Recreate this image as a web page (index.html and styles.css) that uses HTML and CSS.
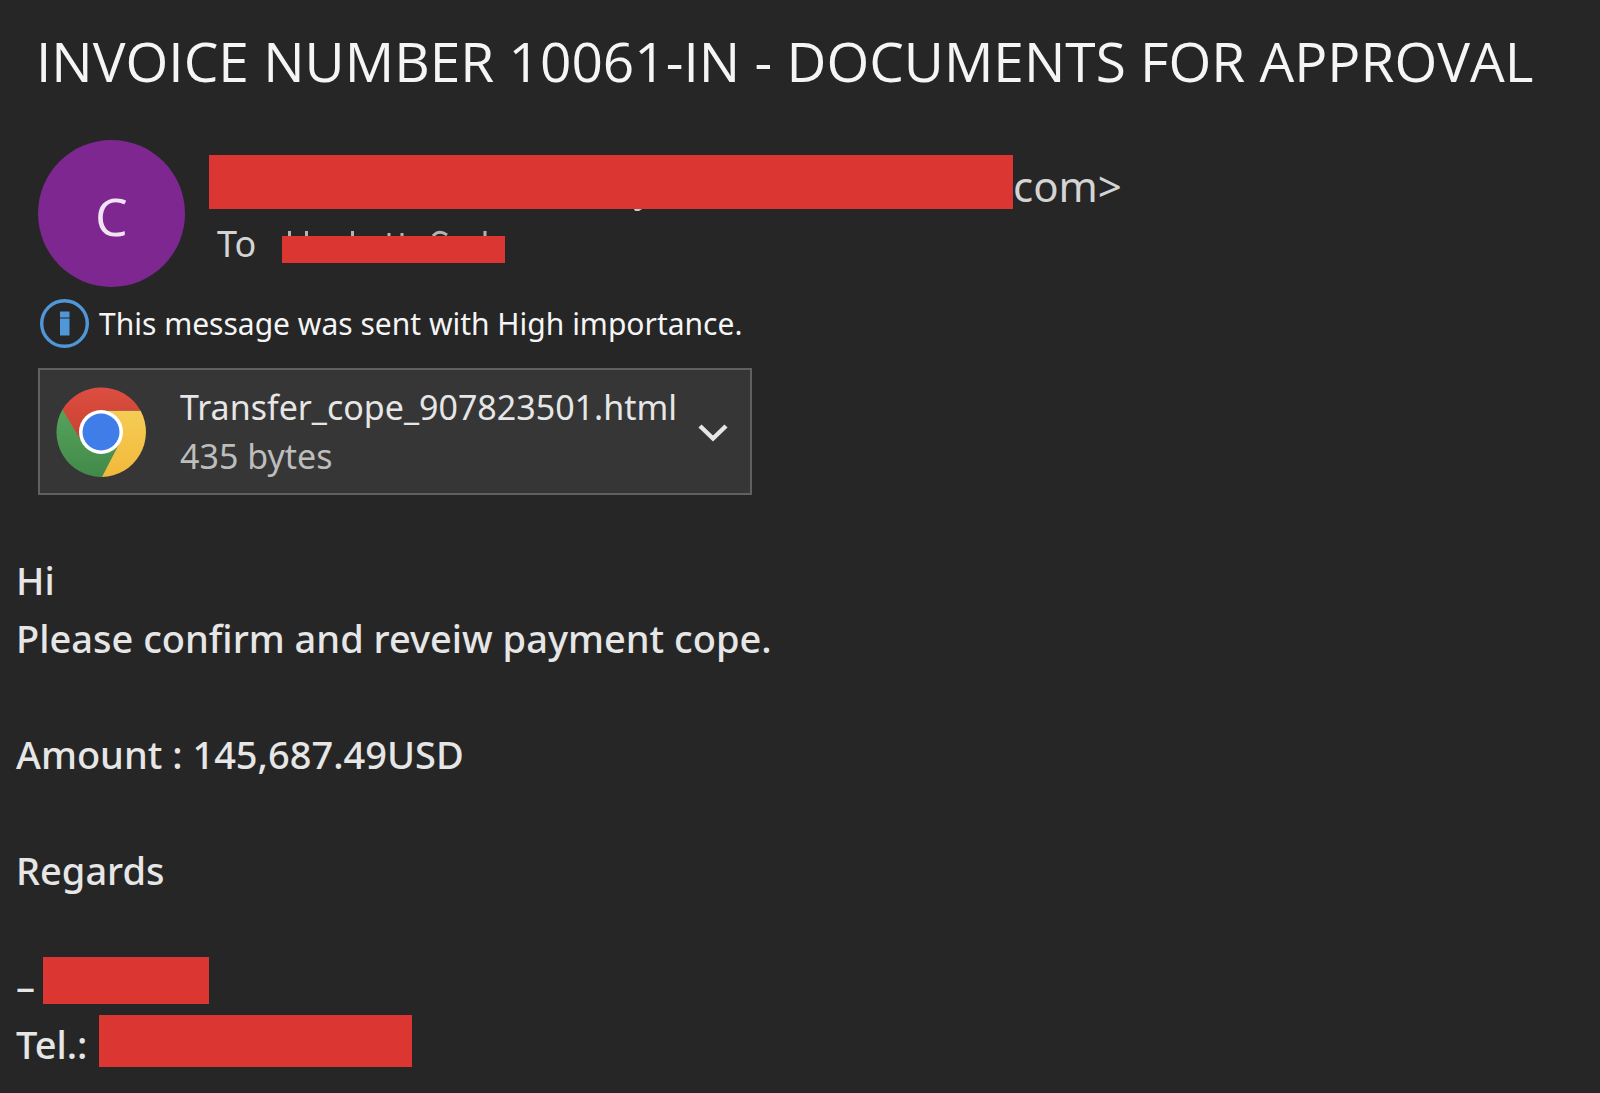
FILE: index.html
```
<!DOCTYPE html>
<html lang="en">
<head>
<meta charset="utf-8">
<meta name="viewport" content="width=device-width, initial-scale=1">
<title>INVOICE NUMBER 10061-IN - DOCUMENTS FOR APPROVAL</title>
<link rel="stylesheet" href="styles.css">
</head>
<body>
<article class="message">
  <header class="message-header">
    <h1 class="subject">INVOICE NUMBER 10061-IN - DOCUMENTS FOR APPROVAL</h1>
    <div class="sender">
      <div class="avatar">C</div>
      <div class="addresses">
        <div class="from">
          <span class="redacted redacted-from">
            <svg class="trace trace-below" width="804" height="3" viewBox="0 0 804 3" aria-hidden="true"><path d="M425 0h8l-3 2h-4z" fill="#c8c8c8"/></svg>
          </span>
          <span class="from-domain">com&gt;</span>
        </div>
        <div class="to">
          <span class="to-label">To</span>
          <span class="redacted redacted-to">
            <svg class="trace trace-above" width="223" height="6" viewBox="0 0 223 6" aria-hidden="true"><g fill="none" stroke="#b4b4b4" stroke-width="3"><path d="M7.500 1v5M24.500 1v5M70.500 1v5M203 1v5"/><path d="M107 6V3M120 6V3"/><path d="M151 6q6-7 14-1"/></g></svg>
          </span>
        </div>
      </div>
    </div>
    <div class="notice">
      <svg class="notice-icon" width="49" height="49" viewBox="0 0 49 49" aria-hidden="true"><circle cx="24.500" cy="24.500" r="22.800" fill="none" stroke="#4f97d6" stroke-width="3.400"/><path d="M20 12.500h9.500v6H20zM20 19.500h9.500v17H20z" fill="#4f97d6"/></svg>
      <span>This message was sent with High importance.</span>
    </div>
    <button class="attachment" type="button">
      <svg class="file-icon" width="90" height="90" viewBox="0 0 90 90" aria-hidden="true">
        <defs>
          <linearGradient id="red" x1="0" y1="0" x2="0" y2="1"><stop offset="0" stop-color="#dc4e41"/><stop offset="1" stop-color="#c8402f"/></linearGradient>
          <linearGradient id="green" x1="0" y1="0" x2="0" y2="1"><stop offset="0" stop-color="#56a35b"/><stop offset="1" stop-color="#42894a"/></linearGradient>
          <linearGradient id="yellow" x1="0" y1="0" x2="0" y2="1"><stop offset="0" stop-color="#f5cc55"/><stop offset="1" stop-color="#f2b93b"/></linearGradient>
        </defs>
        <path d="M45 45 63.600 55.750 46.500 90A45 45 0 0 1 6.500 22.500z" fill="url(#green)"/>
        <path d="M45 23.500H84.500A45 45 0 0 1 46 90L63.600 55.750z" fill="url(#yellow)"/>
        <path d="M6.500 22.500A45 45 0 0 1 84.500 23.500H45L26.400 55.750z" fill="url(#red)"/>
        <circle cx="45" cy="45" r="22" fill="#fff"/>
        <circle cx="45" cy="45" r="18.500" fill="#3f7de8"/>
      </svg>
      <span class="file-text">
        <span class="file-name">Transfer_cope_907823501.html</span>
        <span class="file-size">435 bytes</span>
      </span>
      <svg class="chevron" width="30" height="20" viewBox="0 0 30 20" aria-hidden="true"><path d="M2 4l13 12.500L28 4" fill="none" stroke="#e6e6e6" stroke-width="4.500"/></svg>
    </button>
  </header>
  <div class="message-body">
    <p>Hi<br>Please confirm and reveiw payment cope.</p>
    <p>Amount : 145,687.49USD</p>
    <p>Regards</p>
    <div class="signature">
      <div class="signature-line">–<span class="redacted redacted-name"></span></div>
      <div class="signature-line">Tel.:<span class="redacted redacted-phone"></span></div>
    </div>
  </div>
</article>
</body>
</html>
```
FILE: styles.css
```
* {
  box-sizing: border-box;
}

body {
  margin: 0;
  background: #262626;
  color: #e6e6e6;
  font-family: "Noto Sans", "Open Sans", sans-serif;
}

.message-header {
  padding: 24px 36px 0 38px;
}

.subject {
  margin: 0 0 42px -2px;
  color: #f5f5f5;
  font: 400 55px/74px "Open Sans", "Noto Sans", sans-serif;
}

.sender {
  display: flex;
  gap: 24px;
}

.avatar {
  flex: none;
  width: 147px;
  height: 147px;
  padding-top: 4px;
  border-radius: 50%;
  background: #7e2791;
  color: #f0e4f2;
  font: 400 52px/143px "Open Sans", "Noto Sans", sans-serif;
  text-align: center;
}

.addresses {
  flex: 1;
  padding-top: 15px;
  color: #d4d4d4;
}

.from,
.to {
  display: flex;
  align-items: flex-start;
}

.from {
  font-size: 42px;
  line-height: 62px;
}

.to {
  gap: 26px;
  padding-left: 8px;
  font-size: 36px;
  line-height: 54px;
}

.redacted {
  position: relative;
  flex: none;
  background: #db3632;
}

.redacted-from {
  width: 804px;
  height: 54px;
}

.redacted-to {
  width: 223px;
  height: 27px;
  margin-top: 19px;
}

.trace {
  position: absolute;
  left: 0;
}

.trace-below {
  top: 100%;
}

.trace-above {
  bottom: 100%;
}

.notice {
  display: flex;
  align-items: center;
  gap: 10px;
  margin-top: 12px;
  padding-left: 2px;
  color: #f5f5f5;
  font-size: 30px;
  line-height: 48px;
}

.notice-icon,
.file-icon,
.chevron {
  flex: none;
}

.attachment {
  display: flex;
  align-items: center;
  width: 714px;
  max-width: 100%;
  height: 127px;
  margin: 20px 0 0;
  padding: 0 22px 0 16px;
  border: 2px solid #606060;
  background: #363636;
  color: #e6e6e6;
  font: inherit;
  font-size: 34px;
  line-height: 49px;
  text-align: left;
}

.file-text {
  flex: 1;
  margin-left: 34px;
}

.file-name,
.file-size {
  display: block;
}

.file-size {
  color: #bdbdbd;
}

.message-body {
  padding: 56px 16px 20px;
  font-size: 38px;
  font-weight: 500;
  line-height: 58px;
}

.message-body p {
  margin: 0 0 58px;
}

.signature-line {
  display: flex;
  align-items: flex-start;
}

.redacted-name {
  width: 166px;
  height: 47px;
  margin-left: 8px;
}

.redacted-phone {
  width: 313px;
  height: 52px;
  margin-left: 12px;
}
```
